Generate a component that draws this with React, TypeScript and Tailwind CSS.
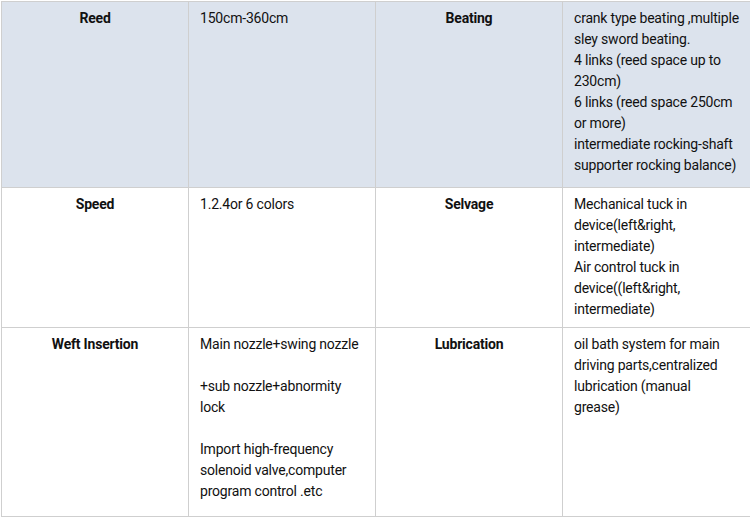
const rows = [
  {
    bg: "bg-[#dce3ed]",
    h: "h-[186px]",
    a: "Reed",
    b: ["150cm-360cm"],
    c: "Beating",
    d: [
      "crank type beating ,multiple",
      "sley sword beating.",
      "4 links (reed space up to",
      "230cm)",
      "6 links (reed space 250cm",
      "or more)",
      "intermediate rocking-shaft",
      "supporter rocking balance)",
    ],
  },
  {
    bg: "bg-white",
    h: "h-[140px]",
    a: "Speed",
    b: ["1.2.4or 6 colors"],
    c: "Selvage",
    d: [
      "Mechanical tuck in",
      "device(left&right,",
      "intermediate)",
      "Air control tuck in",
      "device((left&right,",
      "intermediate)",
    ],
  },
  {
    bg: "bg-white",
    h: "h-[189px]",
    a: "Weft Insertion",
    b: [
      "Main nozzle+swing nozzle",
      "",
      "+sub nozzle+abnormity",
      "lock",
      "",
      "Import high-frequency",
      "solenoid valve,computer",
      "program control .etc",
    ],
    c: "Lubrication",
    d: [
      "oil bath system for main",
      "driving parts,centralized",
      "lubrication (manual",
      "grease)",
    ],
  },
];

function Lines({ lines }: { lines: string[] }) {
  return (
    <>
      {lines.map((l, i) => (
        <div key={i} className="h-[21px] whitespace-nowrap">
          {l || "\u00a0"}
        </div>
      ))}
    </>
  );
}

export default function App() {
  return (
    <div className="h-[519px] w-[750px] bg-white pt-px pl-px font-['Roboto',sans-serif] text-[14px] leading-[21px] tracking-[-0.2px] text-[#111]">
      <table className="w-[750px] table-fixed border-collapse">
        <colgroup>
          <col className="w-[187px]" />
          <col className="w-[187px]" />
          <col className="w-[187px]" />
          <col className="w-[189px]" />
        </colgroup>
        <tbody>
          {rows.map((r) => (
            <tr key={r.a} className={`${r.bg} ${r.h}`}>
              <td className="border border-[#cfcfcf] px-3 pt-[6px] text-center align-top font-bold">
                {r.a}
              </td>
              <td className="border border-[#cfcfcf] pt-[6px] pr-3 pl-[11px] align-top">
                <Lines lines={r.b} />
              </td>
              <td className="border border-[#cfcfcf] px-3 pt-[6px] text-center align-top font-bold">
                {r.c}
              </td>
              <td className="border border-[#cfcfcf] pt-[6px] pr-3 pl-[11px] align-top">
                <Lines lines={r.d} />
              </td>
            </tr>
          ))}
        </tbody>
      </table>
    </div>
  );
}
